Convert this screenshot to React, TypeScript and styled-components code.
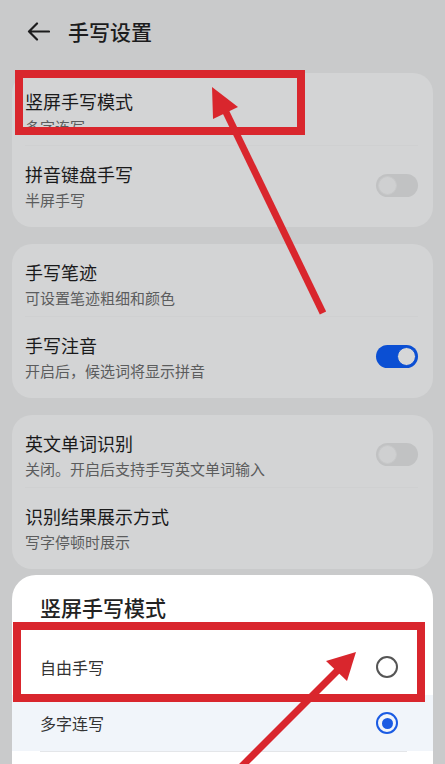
import React from "react";
import styled, { createGlobalStyle } from "styled-components";

const GlobalStyle = createGlobalStyle`
  html, body {
    margin: 0;
    padding: 0;
    background: #c9cacb;
  }
  body {
    font-family: "Noto Sans CJK SC", "Noto Sans", sans-serif;
    overflow: hidden;
  }
  * {
    box-sizing: border-box;
  }
`;

const Page = styled.div`
  position: relative;
  width: 445px;
  height: 764px;
  overflow: hidden;
  background: #c9cacb;
  display: flex;
  flex-direction: column;
`;

const Header = styled.header`
  height: 66px;
  flex-shrink: 0;
  display: flex;
  align-items: center;
  gap: 18px;
  padding: 0 0 4px 27px;
`;

const HeaderTitle = styled.h1`
  margin: 0;
  font-size: 21px;
  font-weight: 500;
  color: #1c1c1d;
  line-height: 28px;
`;

const List = styled.div`
  display: flex;
  flex-direction: column;
  gap: 17px;
  padding: 7px 12px 0;
`;

const Card = styled.section`
  background: #d3d4d5;
  border-radius: 20px;
  padding: 0 15px 10px 13px;
`;

const Row = styled.div<{ $divider?: boolean }>`
  height: 72px;
  display: flex;
  align-items: flex-start;
  justify-content: space-between;
  padding-top: 15px;
  border-top: ${(p) => (p.$divider ? "1px solid #cfd0d1" : "none")};
`;

const RowText = styled.div`
  display: flex;
  flex-direction: column;
`;

const RowTitle = styled.span`
  font-size: 18px;
  line-height: 26px;
  color: #1a1a1b;
`;

const RowSub = styled.span`
  margin-top: 1px;
  font-size: 15px;
  line-height: 24px;
  color: #5b5c5d;
`;

const Toggle = styled.div<{ $on?: boolean }>`
  align-self: center;
  margin-top: -8px;
  width: 42px;
  height: 23px;
  border-radius: 12px;
  background: ${(p) => (p.$on ? "#0b4fd3" : "#c1c2c3")};
  padding: 2px;
  display: flex;
  justify-content: ${(p) => (p.$on ? "flex-end" : "flex-start")};
`;

const Knob = styled.div<{ $on?: boolean }>`
  width: 19px;
  height: 19px;
  border-radius: 50%;
  background: ${(p) => (p.$on ? "#d6d7d8" : "#cfd0d1")};
  border: 1.5px solid ${(p) => (p.$on ? "#0b4fd3" : "#c8c9ca")};
`;

const Sheet = styled.section`
  margin: 6px 12px 0;
  background: #ffffff;
  border-radius: 24px 24px 0 0;
  flex: 1;
  padding-top: 18px;
`;

const SheetTitle = styled.h2`
  margin: 0;
  padding: 0 28px;
  font-size: 21px;
  font-weight: 500;
  line-height: 28px;
  color: #222;
`;

const Options = styled.div`
  margin-top: 18px;
`;

const Option = styled.div<{ $selected?: boolean }>`
  height: 56px;
  display: flex;
  align-items: center;
  justify-content: space-between;
  padding: 0 35px 0 28px;
  background: ${(p) => (p.$selected ? "#f1f5fa" : "transparent")};
  font-size: 16px;
  color: #333;
`;

const OptionDivider = styled.div`
  height: 1px;
  margin: 0 26px 0 28px;
  background: #e4e6e9;
`;

const Radio = styled.div<{ $checked?: boolean }>`
  width: 22px;
  height: 22px;
  border-radius: 50%;
  border: ${(p) => (p.$checked ? "2.5px solid #1a5be3" : "2px solid #555")};
  display: flex;
  align-items: center;
  justify-content: center;

  &::after {
    content: "";
    display: ${(p) => (p.$checked ? "block" : "none")};
    width: 11px;
    height: 11px;
    border-radius: 50%;
    background: #1a5be3;
  }
`;

const Annotations = styled.svg`
  position: absolute;
  top: 0;
  left: 0;
  width: 445px;
  height: 764px;
  pointer-events: none;
  z-index: 10;
`;

const BackArrow = () => (
  <svg width="23" height="19" viewBox="0 0 23 19" fill="none">
    <path
      d="M22 9.5H2M10 1.5L2 9.5l8 8"
      stroke="#1c1c1d"
      strokeWidth="2.2"
      strokeLinecap="round"
      strokeLinejoin="round"
    />
  </svg>
);

type Item = { title: string; sub: string; toggle?: "on" | "off" };

const groups: Item[][] = [
  [
    { title: "竖屏手写模式", sub: "多字连写" },
    { title: "拼音键盘手写", sub: "半屏手写", toggle: "off" },
  ],
  [
    { title: "手写笔迹", sub: "可设置笔迹粗细和颜色" },
    { title: "手写注音", sub: "开启后，候选词将显示拼音", toggle: "on" },
  ],
  [
    { title: "英文单词识别", sub: "关闭。开启后支持手写英文单词输入", toggle: "off" },
    { title: "识别结果展示方式", sub: "写字停顿时展示" },
  ],
];

const App = () => {
  return (
    <>
      <GlobalStyle />
      <Page>
        <Header>
          <BackArrow />
          <HeaderTitle>手写设置</HeaderTitle>
        </Header>

        <List>
          {groups.map((g, gi) => (
            <Card key={gi}>
              {g.map((item, i) => (
                <Row key={item.title} $divider={i > 0}>
                  <RowText>
                    <RowTitle>{item.title}</RowTitle>
                    <RowSub>{item.sub}</RowSub>
                  </RowText>
                  {item.toggle && (
                    <Toggle $on={item.toggle === "on"}>
                      <Knob $on={item.toggle === "on"} />
                    </Toggle>
                  )}
                </Row>
              ))}
            </Card>
          ))}
        </List>

        <Sheet>
          <SheetTitle>竖屏手写模式</SheetTitle>
          <Options>
            <Option>
              <span>自由手写</span>
              <Radio />
            </Option>
            <Option $selected>
              <span>多字连写</span>
              <Radio $checked />
            </Option>
            <OptionDivider />
          </Options>
        </Sheet>

        {/* red markup drawn over the screenshot */}
        <Annotations viewBox="0 0 445 764">
          <rect x="19" y="74" width="282" height="57" fill="none" stroke="#d9262d" strokeWidth="8" />
          <line x1="323" y1="313" x2="224" y2="108" stroke="#d9262d" strokeWidth="7" />
          <polygon points="212,87 213,119 238,107" fill="#d9262d" />
          <rect x="17" y="626" width="404" height="72" fill="none" stroke="#d9262d" strokeWidth="8" />
          <line x1="238" y1="770" x2="339" y2="669" stroke="#d9262d" strokeWidth="7" />
          <polygon points="356,652 326,661 347,681" fill="#d9262d" />
        </Annotations>
      </Page>
    </>
  );
};

export default App;
